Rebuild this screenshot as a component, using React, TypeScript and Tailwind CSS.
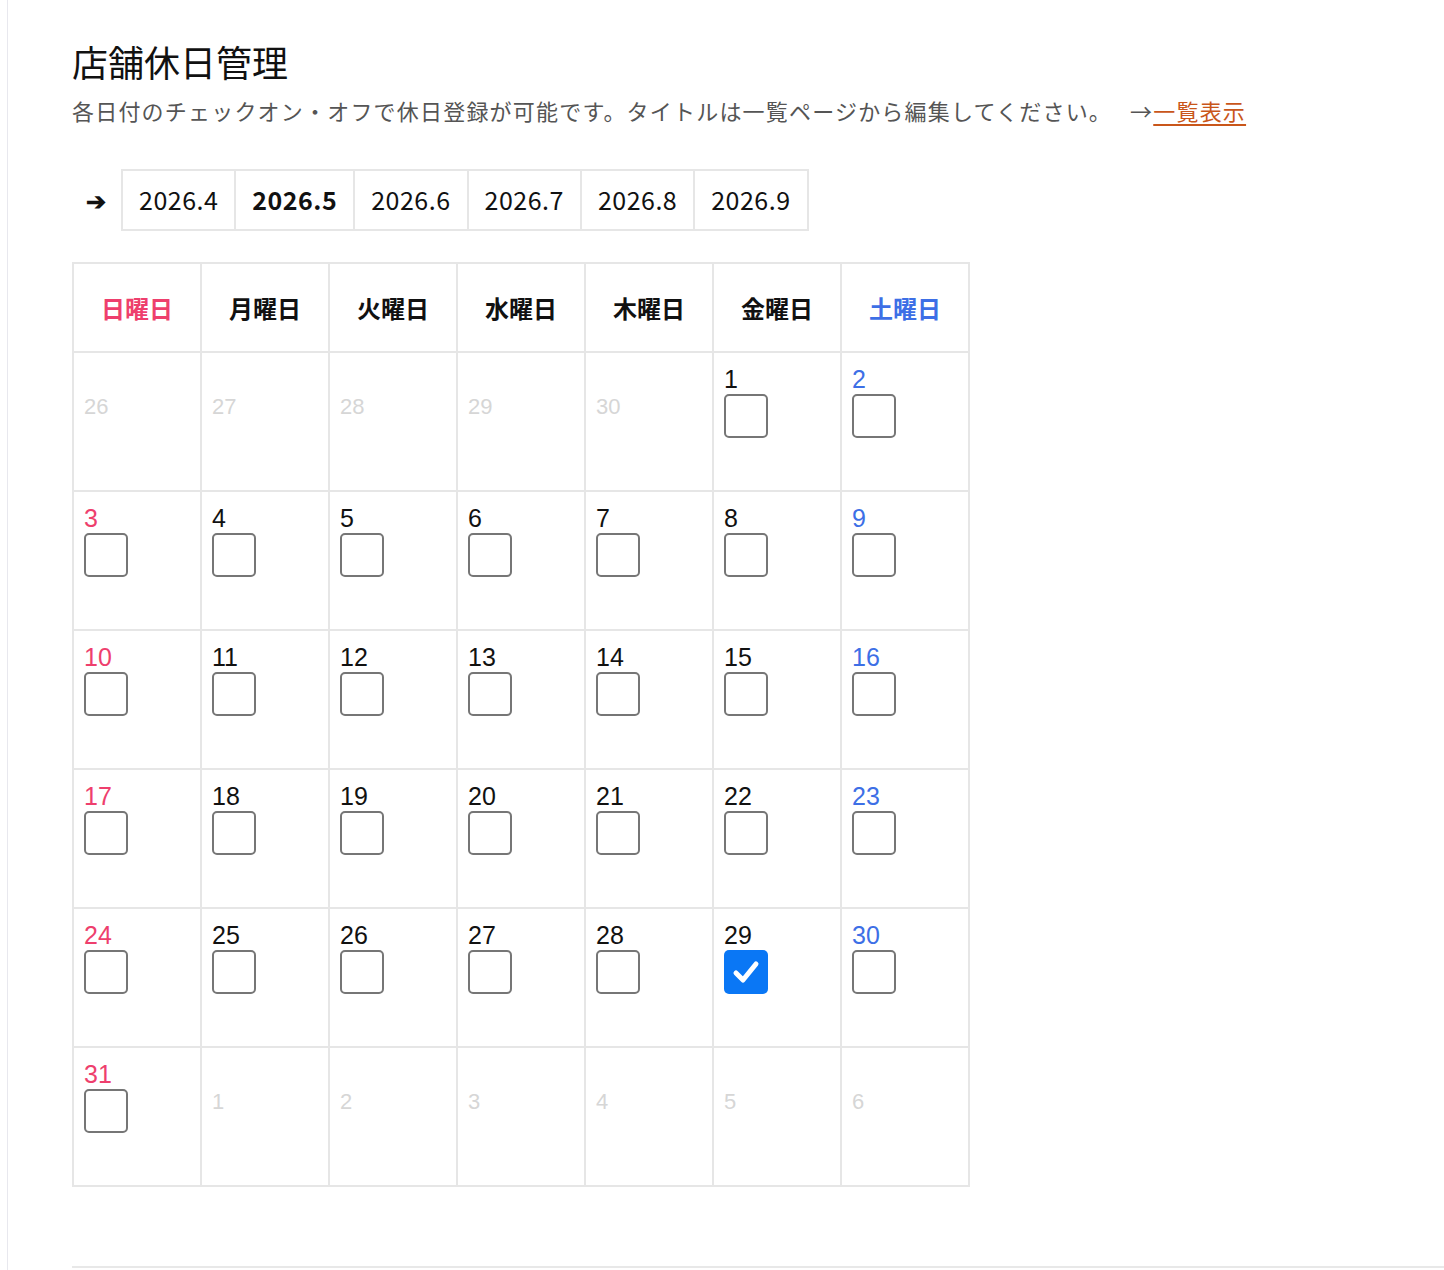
import React from "react";

const F = { fontFamily: '"Noto Sans CJK JP", "Noto Sans", sans-serif' };

type Cell = { d: number; cur: boolean; checked?: boolean };

function buildWeeks(): Cell[][] {
  const cells: Cell[] = [];
  [26, 27, 28, 29, 30].forEach((d) => cells.push({ d, cur: false }));
  for (let d = 1; d <= 31; d++) cells.push({ d, cur: true, checked: d === 29 });
  [1, 2, 3, 4, 5, 6].forEach((d) => cells.push({ d, cur: false }));
  const w: Cell[][] = [];
  for (let i = 0; i < 6; i++) w.push(cells.slice(i * 7, i * 7 + 7));
  return w;
}

const heads = ["日曜日", "月曜日", "火曜日", "水曜日", "木曜日", "金曜日", "土曜日"];
const months = ["2026.4", "2026.5", "2026.6", "2026.7", "2026.8", "2026.9"];

export default function App() {
  const weeks = buildWeeks();
  return (
    <div className="min-h-[1270px] bg-white relative" style={F}>
      <div className="absolute left-[7px] top-0 bottom-0 w-px bg-[#e8e8ee]" />
      <div className="pl-[72px] pt-[36px]">
        <h1 className="text-[36px] leading-[50px] text-[#111]">店舗休日管理</h1>
        <p className="mt-[8px] text-[22px] leading-[32px] tracking-[1.2px] text-[#555] flex items-center">
          各日付のチェックオン・オフで休日登録が可能です。タイトルは一覧ページから編集してください。
          <span className="ml-[18px]">→</span>
          <a className="text-[#c9561a] underline underline-offset-4">一覧表示</a>
        </p>
        <div className="mt-[43px] flex items-center">
          <span className="w-[49px] text-[24px] font-bold text-[#111] pl-[14px]">➔</span>
          <div className="flex border-2 border-[#e6e6e6] h-[62px]">
            {months.map((m, i) => (
              <div
                key={m}
                className={`px-[16px] flex items-center text-[25px] tracking-[0.5px] text-[#111] ${i > 0 ? "border-l-2 border-[#e6e6e6]" : ""} ${i === 1 ? "font-bold" : ""}`}
              >
                {m}
              </div>
            ))}
          </div>
        </div>
        <table className="mt-[31px] border-collapse border-2 border-[#e6e6e6]" style={{ tableLayout: "fixed" }}>
          <thead>
            <tr>
              {heads.map((h, i) => (
                <th
                  key={h}
                  className={`w-[128px] h-[89px] border-2 border-[#e6e6e6] text-[24px] font-bold ${i === 0 ? "text-[#ee3f6d]" : i === 6 ? "text-[#3d6fe6]" : "text-[#111]"}`}
                >
                  {h}
                </th>
              ))}
            </tr>
          </thead>
          <tbody>
            {weeks.map((w, wi) => (
              <tr key={wi}>
                {w.map((c, ci) => (
                  <td key={ci} className="h-[139px] border-2 border-[#e6e6e6] align-top px-[10px] pt-[12px]">
                    {c.cur ? (
                      <div>
                        <div
                          className={`text-[25px] leading-[28px] ${ci === 0 ? "text-[#ee3f6d]" : ci === 6 ? "text-[#3d6fe6]" : "text-[#111]"}`}
                          style={{ fontFamily: '"Liberation Sans", sans-serif' }}
                        >
                          {c.d}
                        </div>
                        {c.checked ? (
                          <div className="mt-[1px] w-[44px] h-[44px] rounded-[5px] bg-[#0a77f5] flex items-center justify-center">
                            <svg width="32" height="32" viewBox="0 0 32 32">
                              <path d="M6 17 L13 24 L26 8" stroke="white" strokeWidth="5" fill="none" strokeLinecap="round" strokeLinejoin="round" />
                            </svg>
                          </div>
                        ) : (
                          <div className="mt-[1px] w-[44px] h-[44px] rounded-[5px] border-2 border-[#767676] bg-white" />
                        )}
                      </div>
                    ) : (
                      <div
                        className="pt-[25px] text-[22px] text-[#d6d6d6]"
                        style={{ fontFamily: '"Liberation Sans", sans-serif' }}
                      >
                        {c.d}
                      </div>
                    )}
                  </td>
                ))}
              </tr>
            ))}
          </tbody>
        </table>
        <div className="mt-[79px] h-[2px] bg-[#e8e8e8]" />
      </div>
    </div>
  );
}
